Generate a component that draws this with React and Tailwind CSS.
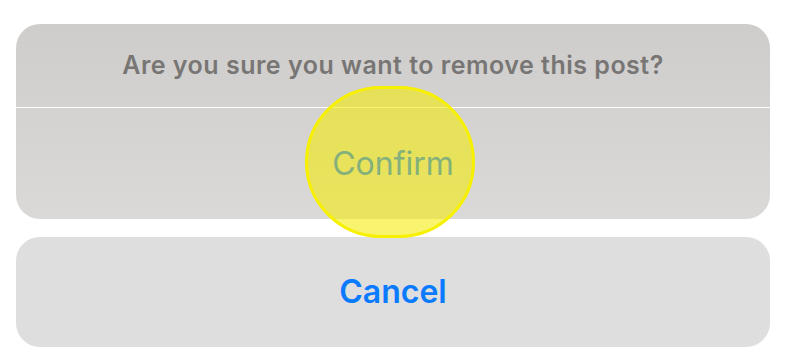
import React from 'react';

const font = { fontFamily: 'Inter, "Noto Sans", sans-serif' };

export default function App() {
  return (
    <div className="w-[786px] h-[364px] bg-white px-4 pt-6 flex flex-col gap-[18px]" style={font}>
      {/* Action sheet */}
      <div className="relative z-10 h-[195px] rounded-[24px] bg-gradient-to-b from-[#cfcdcb] to-[#dad9d8] flex flex-col">
        <div className="h-[84px] flex items-center justify-center border-b border-white">
          <span className="text-[25px] font-semibold text-[#787674] tracking-[0.5px]">Are you sure you want to remove this post?</span>
        </div>
        <div className="relative flex-1 flex items-center justify-center">
          {/* tap indicator */}
          <div className="absolute left-[289px] top-[-22px] w-[170px] h-[152px] rounded-full border-[3px] border-[#f7f000] bg-[rgba(245,235,0,0.57)]" />
          <span className="relative text-[32px] text-[#84b07b]">Confirm</span>
        </div>
      </div>

      <div className="h-[110px] rounded-[24px] bg-[#dedede] flex items-center justify-center">
        <span className="text-[32px] font-semibold text-[#0a7aff]">Cancel</span>
      </div>
    </div>
  );
}
